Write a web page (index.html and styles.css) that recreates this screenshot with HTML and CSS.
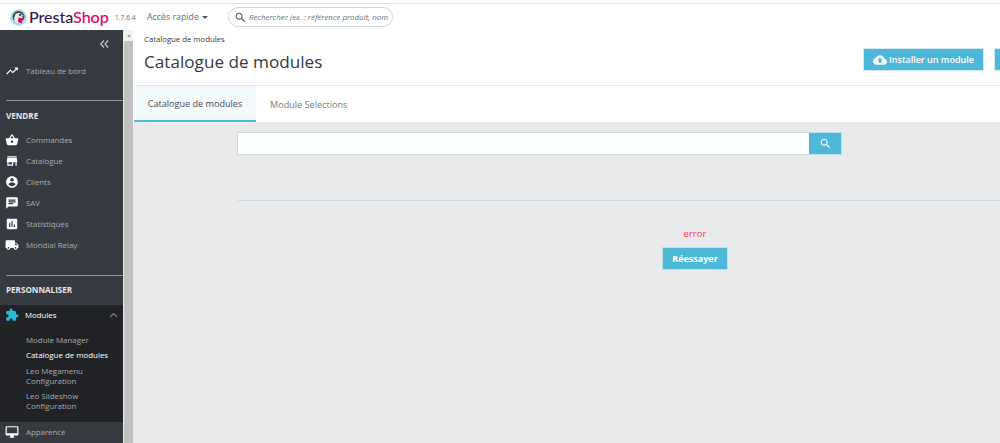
FILE: index.html
```html
<!DOCTYPE html>
<html lang="fr">
<head>
<meta charset="utf-8">
<title>Catalogue de modules</title>
<link rel="stylesheet" href="styles.css">
</head>
<body>
<header class="topbar">
  <div class="logo">
    <svg class="logo-mark" width="17" height="17" viewBox="0 0 17 17"><circle cx="8.500" cy="8.500" r="8.200" fill="#a5dbe8"/><path d="M2.500 8a6 6 0 0 1 12 0l-1 3H3.500z" fill="#4a4d55"/><path d="M5.500 5.500c1-2 5-2 6 0l1 3-1.500 5.500H6.500L4 9.500z" fill="#ececec"/><path d="M8.500 8.500l4.500 1-1.500 5-3.500-1.500z" fill="#df0067"/><circle cx="10" cy="6" r="1.100" fill="#34303a"/><path d="M11 5.500l3 1-2.500 1.500z" fill="#f3b23c"/></svg>
    <span class="logo-text"><span class="presta">Presta</span><span class="shop">Shop</span></span>
    <span class="version">1.7.6.4</span>
  </div>
  <div class="quick">Accès rapide <span class="caret"></span></div>
  <div class="search">
    <svg class="top-search" viewBox="0 0 24 24"><path d="M15.500 14h-.790l-.280-.270C15.410 12.590 16 11.110 16 9.500 16 5.910 13.090 3 9.500 3S3 5.910 3 9.500 5.910 16 9.500 16c1.610 0 3.090-.590 4.230-1.570l.270.280v.790l5 4.990L20.490 19l-4.990-5zm-6 0C7.010 14 5 11.990 5 9.500S7.010 5 9.500 5 14 7.010 14 9.500 11.990 14 9.500 14z"/></svg>
    <span class="search-text">Rechercher (ex. : référence produit, nom</span>
  </div>
</header>
<div class="app">
  <nav class="sidebar">
    <div class="collapse">
      <svg width="9" height="8" viewBox="0 0 9 8"><path d="M4 .5L.8 4 4 7.500M8.200 .5L5 4l3.200 3.500" fill="none" stroke="#c4c5c8" stroke-width="1.200"/></svg>
    </div>
    <a class="item dash">
      <svg class="ico" viewBox="0 0 24 24"><path d="M16 6l2.290 2.290-4.880 4.880-4-4L2 16.590 3.410 18l6-6 4 4 6.300-6.290L22 12V6z"/></svg>
      <span>Tableau de bord</span>
    </a>
    <hr class="rule">
    <div class="section">VENDRE</div>
    <div class="group">
      <a class="item">
        <svg class="ico" viewBox="0 0 24 24"><path d="M17.210 9l-4.380-6.560c-.190-.280-.510-.420-.830-.420-.320 0-.640.140-.830.430L6.790 9H2c-.550 0-1 .450-1 1 0 .090.010.180.040.270l2.540 9.270c.230.840 1 1.460 1.920 1.460h13c.920 0 1.690-.620 1.930-1.460l2.540-9.270L23 10c0-.550-.450-1-1-1h-4.790zM9 9l3-4.400L15 9H9zm3 8c-1.100 0-2-.900-2-2s.900-2 2-2 2 .900 2 2-.900 2-2 2z"/></svg>
        <span>Commandes</span>
      </a>
      <a class="item">
        <svg class="ico" viewBox="0 0 24 24"><path d="M20 4H4v2h16V4zm1 10v-2l-1-5H4l-1 5v2h1v6h10v-6h4v6h2v-6h1zm-9 4H6v-4h6v4z"/></svg>
        <span>Catalogue</span>
      </a>
      <a class="item">
        <svg class="ico" viewBox="0 0 24 24"><path d="M12 2C6.480 2 2 6.480 2 12s4.480 10 10 10 10-4.480 10-10S17.520 2 12 2zm0 3c1.660 0 3 1.340 3 3s-1.340 3-3 3-3-1.340-3-3 1.340-3 3-3zm0 14.200c-2.500 0-4.710-1.280-6-3.220.030-1.990 4-3.080 6-3.080 1.990 0 5.970 1.090 6 3.080-1.290 1.940-3.500 3.220-6 3.220z"/></svg>
        <span>Clients</span>
      </a>
      <a class="item">
        <svg class="ico" viewBox="0 0 24 24"><path d="M20 2H4c-1.100 0-1.990.900-1.990 2L2 22l4-4h14c1.100 0 2-.900 2-2V4c0-1.100-.900-2-2-2zM6 9h12v2H6V9zm8 5H6v-2h8v2zm4-6H6V6h12v2z"/></svg>
        <span>SAV</span>
      </a>
      <a class="item">
        <svg class="ico" viewBox="0 0 24 24"><path d="M19 3H5c-1.100 0-2 .900-2 2v14c0 1.100.900 2 2 2h14c1.100 0 2-.900 2-2V5c0-1.100-.900-2-2-2zM9 17H7v-7h2v7zm4 0h-2V7h2v10zm4 0h-2v-4h2v4z"/></svg>
        <span>Statistiques</span>
      </a>
      <a class="item">
        <svg class="ico" viewBox="0 0 24 24"><path d="M20 8h-3V4H3c-1.100 0-2 .900-2 2v11h2c0 1.660 1.340 3 3 3s3-1.340 3-3h6c0 1.660 1.340 3 3 3s3-1.340 3-3h2v-5l-3-4zM6 18.500c-.830 0-1.500-.670-1.500-1.500s.670-1.500 1.500-1.500 1.500.670 1.500 1.500-.670 1.500-1.500 1.500zm13.500-9l1.960 2.500H17V9.500h2.500zm-1.500 9c-.830 0-1.500-.670-1.500-1.500s.670-1.500 1.500-1.500 1.500.670 1.500 1.500-.670 1.500-1.500 1.500z"/></svg>
        <span>Mondial Relay</span>
      </a>
    </div>
    <hr class="rule rule-two">
    <div class="section section-two">PERSONNALISER</div>
    <div class="open">
      <a class="item modules">
        <svg class="ico puzzle" viewBox="0 0 24 24"><path d="M20.500 11H19V7c0-1.100-.900-2-2-2h-4V3.500C13 2.120 11.880 1 10.500 1S8 2.120 8 3.500V5H4c-1.100 0-1.990.900-1.990 2v3.800H3.500c1.490 0 2.700 1.210 2.700 2.700s-1.210 2.700-2.700 2.700H2V20c0 1.100.900 2 2 2h3.800v-1.500c0-1.490 1.210-2.700 2.700-2.700 1.490 0 2.700 1.210 2.700 2.700V22H17c1.100 0 2-.900 2-2v-4h1.500c1.380 0 2.500-1.120 2.500-2.500S21.880 11 20.500 11z"/></svg>
        <span>Modules</span>
        <svg class="chev" width="9" height="6" viewBox="0 0 9 6"><path d="M1 5l3.500-3.500L8 5" fill="none" stroke="#7b7e83" stroke-width="1.200"/></svg>
      </a>
      <ul class="sub">
        <li>Module Manager</li>
        <li class="current">Catalogue de modules</li>
        <li>Leo Megamenu Configuration</li>
        <li>Leo Slideshow Configuration</li>
      </ul>
    </div>
    <a class="item appearance">
      <svg class="ico" viewBox="0 0 24 24"><path d="M21 2H3c-1.100 0-2 .900-2 2v12c0 1.100.900 2 2 2h7l-2 3v1h8v-1l-2-3h7c1.100 0 2-.900 2-2V4c0-1.100-.900-2-2-2zm0 12H3V4h18v10z"/></svg>
      <span>Apparence</span>
    </a>
  </nav>
  <div class="scrollbar"><div class="scroll-up"><span></span></div></div>
  <main class="main">
    <div class="head">
      <div class="crumb">Catalogue de modules</div>
      <div class="title-row">
        <h1>Catalogue de modules</h1>
        <div class="actions">
          <button class="btn install">
            <svg class="cloud" viewBox="0 0 24 24"><path d="M19.350 10.040C18.670 6.590 15.640 4 12 4 9.110 4 6.600 5.640 5.350 8.040 2.340 8.360 0 10.910 0 14c0 3.310 2.690 6 6 6h13c2.760 0 5-2.240 5-5 0-2.640-2.050-4.780-4.650-4.960zM14 13v4h-4v-4H7l5-5 5 5h-3z"/></svg>
            Installer un module
          </button>
          <button class="btn stub"></button>
        </div>
      </div>
    </div>
    <div class="tabs">
      <div class="tab active">Catalogue de modules</div>
      <div class="tab">Module Selections</div>
    </div>
    <div class="content">
      <div class="searchbar">
        <div class="field"></div>
        <button class="go">
          <svg class="go-ico" viewBox="0 0 24 24"><path d="M15.500 14h-.790l-.280-.270C15.410 12.590 16 11.110 16 9.500 16 5.910 13.090 3 9.500 3S3 5.910 3 9.500 5.910 16 9.500 16c1.610 0 3.090-.590 4.230-1.570l.270.280v.790l5 4.990L20.490 19l-4.990-5zm-6 0C7.010 14 5 11.990 5 9.500S7.010 5 9.500 5 14 7.010 14 9.500 11.990 14 9.500 14z"/></svg>
        </button>
      </div>
      <div class="divider"></div>
      <div class="error">
        <p>error</p>
        <button class="retry">Réessayer</button>
      </div>
    </div>
  </main>
</div>
</body>
</html>
```
FILE: styles.css
```css
* { box-sizing: border-box; }
html, body { margin: 0; height: 100%; overflow: hidden; }
body {
  width: 1000px;
  height: 443px;
  font-family: "Open Sans", sans-serif;
  background: #fff;
  color: #363a41;
  display: flex;
  flex-direction: column;
  padding-top: 3px;
}
.topbar {
  height: 27px;
  flex: none;
  border-top: 1px solid #e4e4e4;
  display: flex;
  align-items: center;
  padding-left: 10px;
}
.logo { display: flex; align-items: center; width: 136px; flex: none; }
.logo-mark { flex: none; }
.logo-text { font-family: "Lato", sans-serif; font-size: 16.200px; font-weight: 500; margin-left: 2px; line-height: 1; letter-spacing: -.1px; }
.presta { color: #34184d; }
.shop { color: #df0067; }
.version { font-size: 6.800px; color: #6c7078; margin-left: 6px; white-space: nowrap; }
.quick { font-size: 8.800px; color: #6c6f74; width: 81px; flex: none; margin-left: 1px; }
.caret { display: inline-block; border: 3px solid transparent; border-top: 3.500px solid #555; border-bottom: 0; vertical-align: 1.500px; margin-left: 1px; }
.search {
  width: 165px;
  height: 20px;
  border: 1px solid #ced4d8;
  border-radius: 10px;
  display: flex;
  align-items: center;
  padding-left: 5px;
  gap: 2px;
  overflow: hidden;
}
.top-search { width: 13px; height: 13px; flex: none; fill: #555; }
.search-text { font-size: 7.900px; font-style: italic; color: #6c7078; white-space: nowrap; }
.app { flex: 1; display: flex; min-height: 0; }
.sidebar { width: 123px; flex: none; background: #363a41; display: flex; flex-direction: column; color: #a9abaf; }
.collapse { height: 30px; display: flex; justify-content: flex-end; padding: 10px 14px 0 0; }
.item { display: flex; align-items: center; height: 21px; padding-left: 5px; font-size: 7.850px; gap: 7px; flex: none; }
.ico { width: 14px; height: 14px; flex: none; fill: #fff; }
.rule { border: 0; border-top: 1px solid #8f9196; margin: 0; margin-left: 6px; flex: none; }
.dash + .rule { margin-top: 19px; }
.section { font-size: 8.100px; font-weight: 700; color: #e6e6e7; padding-left: 6px; margin-top: 9px; line-height: 12px; }
.group { margin-top: 7px; }
.rule-two { margin-top: 20px; }
.section-two { margin-top: 8px; }
.open { background: #202226; margin-top: 9px; height: 117px; flex: none; }
.modules { color: #fff; height: 20px; position: relative; gap: 6px; }
.puzzle { fill: #25b9d7; }
.chev { position: absolute; right: 5px; top: 7px; }
.sub { list-style: none; margin: 0; padding: 10px 4px 0 26px; font-size: 7.900px; line-height: 10px; color: #a9abaf; }
.sub li { margin-bottom: 5.300px; }
.sub .current { color: #fff; }
.appearance { height: 20px; }
.scrollbar { width: 10px; flex: none; background: #c1c1c1; border-left: 1px solid #e8e8e8; }
.scroll-up { height: 11px; background: #f1f1f1; display: flex; justify-content: center; padding-top: 4px; }
.scroll-up span { width: 0; height: 0; border: 2px solid transparent; border-top: 0; border-bottom: 3px solid #a3a3a3; }
.main { flex: 1; min-width: 0; display: flex; flex-direction: column; overflow: hidden; }
.head { height: 56px; flex: none; border-bottom: 1px solid #e4e6e8; padding: 3px 0 0 11px; }
.crumb { font-size: 7.750px; line-height: 12px; color: #363a41; }
.title-row { display: flex; justify-content: space-between; align-items: flex-start; }
h1 { margin: 4px 0 0; font-size: 17.150px; font-weight: 400; line-height: 26px; color: #363a41; white-space: nowrap; }
.actions { display: flex; gap: 10px; margin: 3px -115px 0 0; flex: none; }
.btn { height: 23px; border: 1px solid #d3eaf3; background: #4db8d8; color: #fff; font: 600 9px "Open Sans", sans-serif; display: flex; align-items: center; justify-content: center; gap: 2px; padding: 0; }
.cloud { width: 14px; height: 14px; fill: #fff; flex: none; }
.install { width: 121px; }
.stub { width: 121px; }
.tabs { height: 36px; flex: none; display: flex; background: #fff; font-size: 9.100px; }
.tab { padding: 0 14px; display: flex; align-items: center; color: #7a7d82; }
.active { width: 122px; background: #f4f9fb; color: #4a4d53; border-bottom: 2px solid #4db8d8; white-space: nowrap; justify-content: center; padding: 0; margin-left: 1px; }
.content { flex: 1; background: #e9eaec; padding-left: 104px; }
.searchbar { display: flex; height: 23px; margin-top: 10px; }
.field { width: 572px; flex: none; background: #fff; border: 1px solid #c8d8dc; border-right: 0; }
.go { width: 33px; flex: none; background: #4db8d8; border: 1px solid #bfe0ea; border-left: 0; padding: 0; display: flex; align-items: center; justify-content: center; }
.go-ico { width: 13px; height: 13px; fill: #fff; }
.divider { border-top: 1px solid #c9d8d8; margin: 45px 0 0 1px; }
.error { width: 916px; text-align: center; }
.error p { margin: 27px 0 0; font-size: 9.600px; line-height: 12px; color: #f0424e; }
.retry { display: block; margin: 7px auto 0; width: 66px; height: 23px; border: 1px solid #bfe0ea; background: #4db8d8; color: #fff; font: 700 9px "Open Sans", sans-serif; padding: 0; }
```
